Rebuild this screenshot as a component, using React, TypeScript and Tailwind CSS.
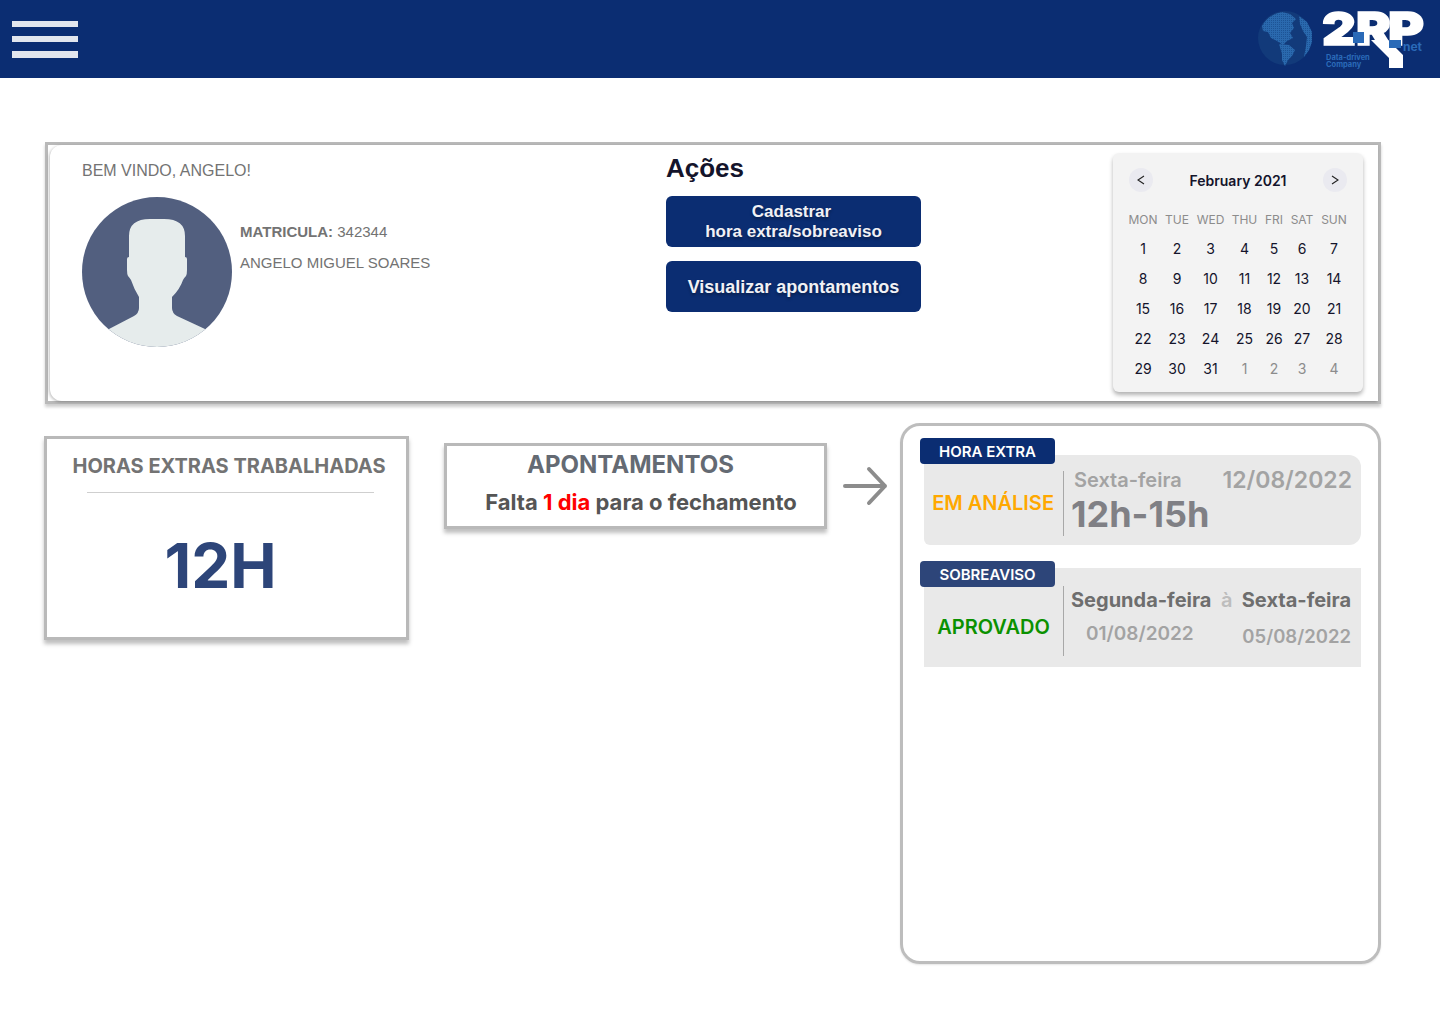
const days = [
  "1", "2", "3", "4", "5", "6", "7",
  "8", "9", "10", "11", "12", "13", "14",
  "15", "16", "17", "18", "19", "20", "21",
  "22", "23", "24", "25", "26", "27", "28",
  "29", "30", "31",
];
const nextDays = ["1", "2", "3", "4"];
const weekDays = ["MON", "TUE", "WED", "THU", "FRI", "SAT", "SUN"];

const Logo = () => (
  <svg width="170" height="78" viewBox="0 0 170 78" className="overflow-visible">
    <defs>
      <pattern id="halftone" width="2" height="2" patternUnits="userSpaceOnUse">
        <rect width="2" height="2" fill="#2a69ae" />
        <rect width="1" height="1" fill="#1d5496" />
      </pattern>
    </defs>
    <circle cx="28" cy="38" r="27" fill="#123a7a" />
    <path d="M5 26 Q12 14 25 12 L33 14 L39 19 L35 23 L37 28 L33 33 L36 38 L30 41 L26 45 L20 41 L14 38 L11 32 L6 31 Z" fill="url(#halftone)" />
    <path d="M22 44 L32 45 L38 50 L35 56 L31 60 L28 66 L25 60 L25 54 Z" fill="url(#halftone)" />
    <path d="M42 16 L50 22 L55 32 L55 42 L52 50 L47 57 L49 46 L50 37 L46 31 L43 24 Z" fill="url(#halftone)" />
    <g fontFamily="Inter, sans-serif" fontWeight="900" fontSize="46" fill="#ffffff" stroke="#ffffff" strokeWidth="1.5">
      <text x="65" y="45" textLength="34" lengthAdjust="spacingAndGlyphs">2</text>
      <text x="99" y="45" textLength="35" lengthAdjust="spacingAndGlyphs">R</text>
      <text x="131" y="45" textLength="36" lengthAdjust="spacingAndGlyphs">P</text>
    </g>
    <path d="M114 40 H131 L146 55 V68 H132 V58 Z" fill="#ffffff" />
    <rect x="96" y="32" width="11" height="11" fill="#2a6ab8" />
    <rect x="132" y="40" width="12" height="8" fill="#2a6ab8" />
    <text x="146" y="51" fontFamily="Inter, sans-serif" fontWeight="700" fontSize="12" fill="#2a6ab8">net</text>
    <text x="69" y="60" fontFamily="Inter, sans-serif" fontWeight="700" fontSize="7.5" fill="#2a6ab8">Data-driven</text>
    <text x="69" y="67" fontFamily="Inter, sans-serif" fontWeight="700" fontSize="7.5" fill="#2a6ab8">Company</text>
  </svg>
);

const Avatar = () => (
  <svg width="150" height="150" viewBox="0 0 150 150" className="shrink-0">
    <defs>
      <clipPath id="avatar-circle">
        <circle cx="75" cy="75" r="75" />
      </clipPath>
    </defs>
    <circle cx="75" cy="75" r="75" fill="#525f7f" />
    <path
      clipPath="url(#avatar-circle)"
      d="M27 132 L52 119 Q57 116 57 111 V100 Q52 92 49 83 Q47 80 46 79 Q45 77 45 73 V62 Q45 60 47 60 V39 Q47 22 68 22 H82 Q103 22 103 39 V60 Q105 60 105 62 V73 Q105 77 104 79 Q102 81 101 83 Q98 92 90 100 V111 Q90 116 95 119 L123 132 V150 H27 Z"
      fill="#e6ecec"
    />
  </svg>
);

const Calendar = () => (
  <div className="mt-2 mr-[15px] w-[250px] h-[239px] shrink-0 rounded-md bg-[#f3f3f3] shadow-[0_3px_4px_rgba(0,0,0,0.3)] px-[13px] pt-[15px] font-['Inter',sans-serif]">
    <div className="flex items-center justify-between px-[3px] h-6">
      <div className="w-6 h-6 rounded-full bg-[#eaeaf0] flex items-center justify-center">
        <svg width="10" height="10" viewBox="0 0 10 10" fill="none" stroke="#222" strokeWidth="1.1"><path d="M8 1 L2 5 L8 9" /></svg>
      </div>
      <span className="pt-[2px] text-sm font-semibold text-[#14142b]">February 2021</span>
      <div className="w-6 h-6 rounded-full bg-[#eaeaf0] flex items-center justify-center">
        <svg width="10" height="10" viewBox="0 0 10 10" fill="none" stroke="#222" strokeWidth="1.1"><path d="M2 1 L8 5 L2 9" /></svg>
      </div>
    </div>
    <div className="mt-[15px] grid grid-cols-[34px_34px_33px_35px_24px_32px_32px] auto-rows-[30px] items-center justify-items-center text-sm text-[#14142b]">
      {weekDays.map((d) => (
        <span key={d} className="text-xs text-[#8c8c8c] leading-none -mt-[4px]">{d}</span>
      ))}
      {days.map((d) => (
        <span key={d} className="-mt-[7px] leading-none">{d}</span>
      ))}
      {nextDays.map((d) => (
        <span key={"n" + d} className="-mt-[7px] leading-none text-[#8c8c8c]">{d}</span>
      ))}
    </div>
  </div>
);

const HoraExtra = () => (
  <div className="relative mt-[29px] ml-[21px] w-[437px] h-[90px] rounded-r-xl rounded-bl-md bg-[#e9e9e9] flex items-center">
    <div className="absolute -left-1 -top-[17px] w-[135px] h-[26px] rounded bg-[#0b2d72] flex items-center justify-center pt-[2px] text-[15px] font-semibold text-white">
      HORA EXTRA
    </div>
    <div className="w-[140px] shrink-0 mt-[6px] h-[65px] border-r border-[#a8a8a8] flex items-center justify-end pr-[9px] text-xl font-semibold text-[#ffa800] whitespace-nowrap">
      EM ANÁLISE
    </div>
    <div className="flex-1 h-full pl-[8px] pr-[9px] pt-[11px] leading-none">
      <div className="flex justify-between items-center h-7">
        <span className="pl-[2px] text-xl font-semibold text-[#a3a3a3]">Sexta-feira</span>
        <span className="text-[23px] font-semibold text-[#a3a3a3]">12/08/2022</span>
      </div>
      <div className="-mt-[2px] -ml-[1px] text-[36px] font-bold leading-[44px] text-[#808085] whitespace-nowrap">12h-15h</div>
    </div>
  </div>
);

const Sobreaviso = () => (
  <div className="relative mt-[23px] ml-[21px] w-[437px] h-[99px] bg-[#e9e9e9] flex items-center">
    <div className="absolute -left-1 -top-[7px] w-[135px] h-[26px] rounded bg-[#2d4579] flex items-center justify-center pt-[2px] text-[15px] font-semibold text-white">
      SOBREAVISO
    </div>
    <div className="w-[140px] shrink-0 mt-[7px] h-[70px] border-r border-[#a8a8a8] flex items-center justify-center pt-3 text-xl font-semibold text-[#0b9100] whitespace-nowrap">
      APROVADO
    </div>
    <div className="flex-1 h-full pl-[7px] pr-[10px] pt-[18px] leading-none">
      <div className="flex justify-between items-center h-7 text-xl font-bold text-[#6e6e6e] whitespace-nowrap">
        <span>Segunda-feira</span>
        <span className="font-semibold text-[#bdbdbd]">à</span>
        <span>Sexta-feira</span>
      </div>
      <div className="flex justify-between pl-[15px] font-semibold text-[#a3a3a3]">
        <span className="mt-[10px] text-[19px]">01/08/2022</span>
        <span className="mt-[13px] text-[18.5px]">05/08/2022</span>
      </div>
    </div>
  </div>
);

export default function App() {
  return (
    <div className="min-h-[1024px] bg-white font-['Inter',sans-serif]">
      <header className="h-[78px] bg-[#0b2d72] flex items-center justify-between pl-3 pr-[13px]">
        <div className="w-[66px] flex flex-col gap-[9px]">
          <div className="h-[6px] bg-[#e2e6ee]" />
          <div className="h-[6px] bg-[#e2e6ee]" />
          <div className="h-[7px] bg-[#e2e6ee]" />
        </div>
        <Logo />
      </header>

      <section className="mt-16 ml-[45px] w-[1336px] h-[262px] border-[3px] border-[#b9b9b9] shadow-[0_3px_3px_rgba(0,0,0,0.2)]">
        <div className="ml-[2px] h-full rounded-l-xl bg-white shadow-[-1px_1px_3px_rgba(0,0,0,0.25)] flex font-['Liberation_Sans',sans-serif]">
          <div className="w-[616px] pl-[32px] pt-[16px]">
            <p className="text-base leading-[20px] text-[#737373]">BEM VINDO, ANGELO!</p>
            <div className="mt-[16px] flex">
              <Avatar />
              <div className="ml-2 pt-[25px] text-[#737373]">
                <p className="text-[15px] leading-5"><b>MATRICULA:</b> 342344</p>
                <p className="mt-[11px] text-[15px] leading-5">ANGELO MIGUEL SOARES</p>
              </div>
            </div>
          </div>
          <div className="w-[255px] pt-[8px]">
            <h2 className="text-[26px] leading-[30px] font-bold text-[#14142b]">Ações</h2>
            <button className="mt-[13px] w-full h-[51px] rounded-md bg-[#0b2d72] text-[17px] font-bold leading-[20px] text-[#f1f1f5] [text-shadow:0_2px_3px_rgba(0,0,0,0.35)]">
              <span className="pr-1">Cadastrar</span><br />hora extra/sobreaviso
            </button>
            <button className="mt-[14px] w-full h-[51px] rounded-md bg-[#0b2d72] text-lg font-bold text-[#f1f1f5] [text-shadow:0_2px_3px_rgba(0,0,0,0.35)]">
              Visualizar apontamentos
            </button>
          </div>
          <div className="flex-1 flex justify-end">
            <Calendar />
          </div>
        </div>
      </section>

      <section className="mt-[19px] flex items-start">
        <div className="mt-[13px] ml-[44px] w-[365px] h-[204px] border-[3px] border-[#b9b9b9] shadow-[0_4px_4px_rgba(0,0,0,0.25)] flex flex-col items-center">
          <h3 className="mt-[15px] pl-[5px] text-xl leading-6 font-bold text-[#737373] whitespace-nowrap">HORAS EXTRAS TRABALHADAS</h3>
          <div className="mt-[14px] ml-2 w-[287px] border-t border-[#cfcfcf]" />
          <div className="mt-[37px] -ml-[12px] text-[62px] leading-[72px] font-bold text-[#2d4579]">12H</div>
        </div>

        <div className="mt-5 ml-[35px] w-[383px] h-[86px] border-[3px] border-[#b9b9b9] shadow-[0_4px_4px_rgba(0,0,0,0.25)] text-center">
          <h3 className="mt-[3px] pr-[10px] text-2xl leading-[32px] font-bold text-[#646a73]">APONTAMENTOS</h3>
          <p className="mt-[7px] pl-[11px] text-[22px] leading-[28px] font-bold text-[#555555] whitespace-nowrap">
            Falta <span className="text-[#ff0000]">1 dia</span> para o fechamento
          </p>
        </div>

        <svg width="46" height="40" viewBox="0 0 46 40" fill="none" stroke="#8c8c8c" strokeWidth="4" strokeLinecap="round" strokeLinejoin="round" className="mt-[43px] ml-4 shrink-0">
          <path d="M2 20 H42 M26 3 L42 20 L26 37" />
        </svg>

        <div className="ml-[11px] w-[481px] h-[541px] rounded-[20px] border-[3px] border-[#bdbdbd] shadow-[0_1px_2px_rgba(0,0,0,0.1)]">
          <HoraExtra />
          <Sobreaviso />
        </div>
      </section>
    </div>
  );
}
